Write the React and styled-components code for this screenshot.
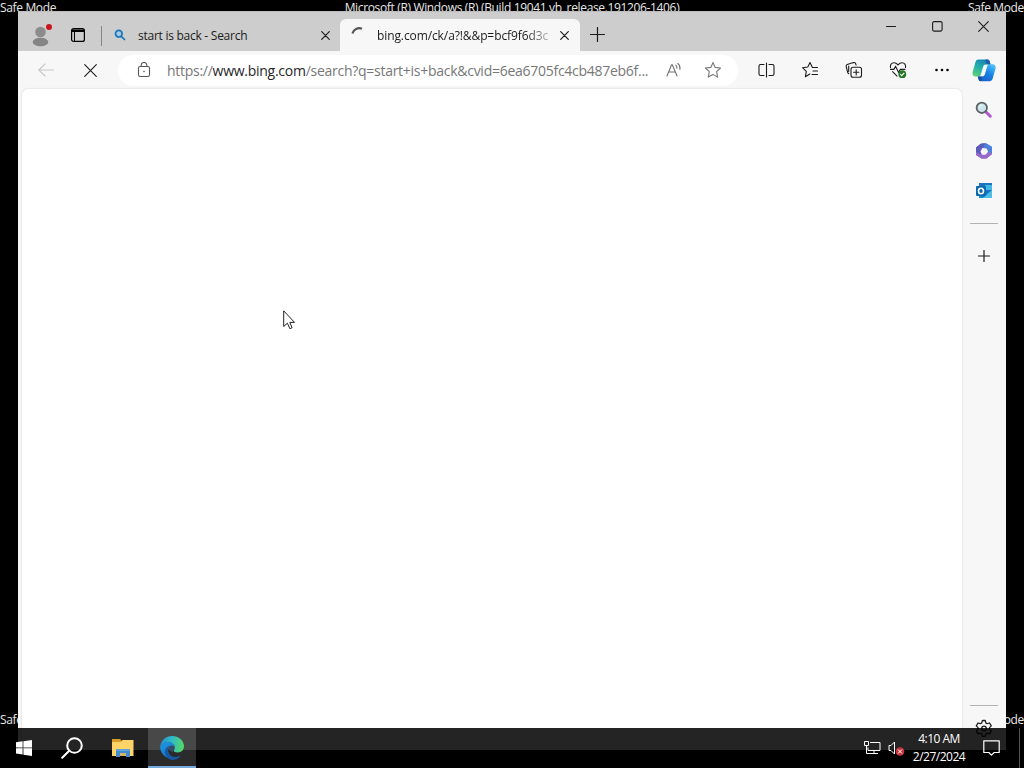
import React from "react";
import styled, { createGlobalStyle } from "styled-components";

const GlobalStyle = createGlobalStyle`
  * {
    box-sizing: border-box;
  }

  body {
    margin: 0;
    background: #000;
    overflow: hidden;
    font-family: "Open Sans", "Noto Sans", sans-serif;
  }

  svg {
    display: block;
    flex: none;
  }
`;

const Desktop = styled.div`
  position: relative;
  width: 1024px;
  height: 768px;
  background: #000;
  overflow: hidden;
`;

const SafeModeRow = styled.div`
  position: absolute;
  left: 0;
  right: 0;
  top: ${({ $top }) => $top}px;
  display: flex;
  justify-content: space-between;
  color: #e8e8e8;
  font-size: 12px;
  line-height: 16px;
  letter-spacing: -0.35px;
  white-space: nowrap;
`;

const SafeModeLabel = styled.span``;

const BrowserWindow = styled.div`
  position: absolute;
  left: 18px;
  top: 11px;
  width: 988px;
  height: 739px;
  display: flex;
  flex-direction: column;
  background: #f7f7f7;
`;

const TitleBar = styled.div`
  display: flex;
  height: 40px;
  background: #cdcdcd;
  border-top: 1px solid #bdbbbb;
`;

const TitleTools = styled.div`
  display: flex;
  align-items: center;
  width: 84px;
  padding: 7px 0 0 12px;
  gap: 17px;
`;

const TabDivider = styled.div`
  width: 1px;
  height: 20px;
  margin-top: 14px;
  margin-left: -1px;
  background: #858585;
`;

const Tab = styled.div`
  display: flex;
  align-items: center;
  width: ${({ $active }) => ($active ? 240 : 238)}px;
  height: 32px;
  margin-top: 7px;
  padding-left: ${({ $active }) => ($active ? 10 : 12)}px;
  padding-right: ${({ $active }) => ($active ? 11 : 10)}px;
  background: ${({ $active }) => ($active ? "#f7f7f7" : "transparent")};
  border-radius: 6px 6px 0 0;
`;

const TabTitle = styled.span`
  flex: 1;
  min-width: 0;
  margin-left: ${({ $fade }) => ($fade ? 11 : 12)}px;
  margin-right: 10px;
  padding-top: 1px;
  white-space: nowrap;
  font-size: 12px;
  line-height: 18px;
  letter-spacing: ${({ $spacing }) => $spacing};
  color: #1b1b1b;
  mask-image: ${({ $fade }) =>
    $fade ? "linear-gradient(to right, #000 86%, transparent 104%)" : "none"};
`;

const NewTab = styled.div`
  display: flex;
  width: 34px;
  padding: 15px 0 0 10px;
`;

const WindowControls = styled.div`
  display: flex;
  height: 29px;
  margin-left: auto;
`;

const WindowButton = styled.div`
  display: flex;
  align-items: center;
  justify-content: center;
  width: 46px;
`;

const BrowserBody = styled.div`
  display: flex;
  flex: 1;
  min-height: 0;
`;

const MainColumn = styled.div`
  display: flex;
  flex-direction: column;
  width: 944px;
`;

const Toolbar = styled.div`
  display: flex;
  align-items: center;
  width: 944px;
  height: 38px;
`;

const NavButton = styled.div`
  display: flex;
  align-items: center;
  justify-content: center;
  width: 44px;
`;

const NavGroup = styled.div`
  display: flex;
  flex: none;
  width: 100px;
  padding-left: 6px;
`;

const AddressBar = styled.div`
  display: flex;
  align-items: center;
  flex: none;
  width: 620px;
  height: 31px;
  padding-left: 18px;
  background: #fff;
  border-radius: 16px;
`;

const Url = styled.span`
  width: 498px;
  margin-left: 15px;
  padding-top: 1px;
  color: #777;
  font-size: 14px;
  line-height: 20px;
  letter-spacing: -0.27px;
  white-space: nowrap;
`;

const UrlHost = styled.b`
  color: #262626;
  font-weight: 400;
`;

const AddressActions = styled.div`
  display: flex;
  align-items: center;
  gap: 21px;
`;

const ToolbarActions = styled.div`
  display: flex;
  flex: none;
  margin-left: 6px;
`;

const Page = styled.div`
  flex: 1;
  margin-left: 4px;
  background: #fff;
  border-radius: 6px 6px 0 0;
  box-shadow: 0 0 2px rgba(0, 0, 0, 0.18);
`;

const Sidebar = styled.div`
  display: flex;
  flex-direction: column;
  align-items: center;
  flex: 1;
`;

const SidebarItem = styled.div`
  display: flex;
  align-items: center;
  justify-content: center;
  width: 40px;
  height: ${({ $height }) => $height || 40}px;
`;

const SidebarRule = styled.div`
  width: 28px;
  height: 1px;
  margin-top: ${({ $top }) => $top};
  background: #b3b3b3;
`;

const Taskbar = styled.div`
  position: absolute;
  left: 0;
  bottom: 0;
  display: flex;
  width: 1024px;
  height: 40px;
  background: rgba(0, 0, 0, 0.86);
`;

const TaskButton = styled.div`
  display: flex;
  align-items: center;
  justify-content: center;
  width: ${({ $width }) => $width || 48}px;
  padding-top: ${({ $active }) => ($active ? "1px" : "0")};
  padding-left: ${({ $inset }) => $inset || 0}px;
  background: ${({ $active }) =>
    $active ? "rgba(255, 255, 255, 0.17)" : "transparent"};
  border-bottom: ${({ $active }) => ($active ? "2px solid #76a9dc" : "0")};
`;

const Tray = styled.div`
  display: flex;
  align-items: center;
  margin-left: auto;
`;

const TrayIcons = styled.div`
  display: flex;
  gap: 7px;
  margin-right: 4px;
`;

const Clock = styled.div`
  width: 60px;
  color: #fff;
  font-size: 12px;
  line-height: 18px;
  letter-spacing: -0.5px;
  text-align: center;
  white-space: nowrap;
`;

const ActionCenter = styled.div`
  display: flex;
  padding-left: 14px;
  width: 50px;
  height: 16px;
`;

const ShowDesktop = styled.div`
  width: 5px;
  height: 40px;
  border-left: 1px solid #555;
`;

const Cursor = styled.svg`
  position: absolute;
  left: 283px;
  top: 310px;
`;

const Stroke = ({ w, h = w, color = "#1c1c1c", width = 1.1, children }) => (
  <svg
    width={w}
    height={h}
    viewBox={`0 0 ${w} ${h}`}
    fill="none"
    stroke={color}
    strokeWidth={width}
    strokeLinecap="round"
    strokeLinejoin="round"
  >
    {children}
  </svg>
);

const CloseIcon = ({ size = 9, width = 1.2 }) => (
  <Stroke w={size} width={width}>
    <path d={`M.7.7 ${size - 0.7} ${size - 0.7}M${size - 0.7}.7 .7 ${size - 0.7}`} />
  </Stroke>
);

const ProfileIcon = () => (
  <svg width="24" height="24" viewBox="0 0 24 24">
    <circle cx="10.5" cy="9" r="5.3" fill="#8c8c8c" />
    <ellipse cx="10.5" cy="19" rx="7.8" ry="4.3" fill="#858585" />
    <circle cx="19" cy="4" r="3" fill="#c9151b" />
  </svg>
);

const WorkspaceIcon = () => (
  <svg width="14" height="14" viewBox="0 0 14 14">
    <rect x=".6" y=".6" width="12.8" height="12.8" rx="2" fill="none" stroke="#000" strokeWidth="1.2" />
    <path d="M1 1.5h12V4H1z" fill="#000" />
    <path d="M3.5 4v9" stroke="#000" strokeWidth="1" />
  </svg>
);

const BingSearchIcon = () => (
  <Stroke w={12} color="#1674bb" width={1.7}>
    <circle cx="4.8" cy="4.7" r="3.3" fill="#a9cbe2" />
    <path d="m7.5 7.5 3 3" />
  </Stroke>
);

const LockIcon = () => (
  <Stroke w={16} h={16} color="#555">
    <rect x="2.5" y="4.5" width="11" height="10" rx="1.8" />
    <path d="M5.2 4.5V3a2.8 2.5 0 0 1 5.6 0v1.5" />
    <circle cx="8" cy="9.5" r=".8" fill="#555" stroke="none" />
  </Stroke>
);

const ReadAloudIcon = () => (
  <Stroke w={18} h={16} color="#707070" width={1.1}>
    <path d="M2 14 6.6 2.8h.7L12 14M3.7 10h6.6M10.8 3.2c.9.8 1.2 1.8 1.1 3M12.8 1.3c1.9 1.6 2.5 3.7 2.1 6" />
  </Stroke>
);

const StarIcon = () => (
  <Stroke w={18} color="#777">
    <path d="m9 1.5 2.2 4.9 5.3.6-3.9 3.7 1 5.4L9 13.4l-4.7 2.7 1-5.4L1.4 7l5.4-.6Z" />
  </Stroke>
);

const SplitIcon = () => (
  <Stroke w={17} h={16}>
    <path d="M6 2.5H2.5Q1 2.5 1 4v8q0 1.5 1.5 1.5H6M11 2.500h3.500Q16 2.500 16 4v8q0 1.500-1.500 1.500H11M8.500 1v14" />
  </Stroke>
);

const FavoritesIcon = () => (
  <Stroke w={18}>
    <path d="M16.5 6.500h-5.100L9 1.600 6.800 6 1.500 6.700l3.800 3.700-.9 5.400L8.800 13M12 10h4.500M11 13.500h5.500" />
  </Stroke>
);

const CollectionsIcon = () => (
  <Stroke w={18}>
    <rect x="6" y="6.3" width="10.5" height="10" rx="2" />
    <path d="M11.2 8.7v5.2M8.6 11.3h5.2M3.8 12.6c-.8-.2-1-.6-1.200-1.400L1.200 5.500C1 4.400 1.200 4 2.200 3.600l6.300-2q1.500-.4 2 .8l.6 1.600M3.700 10.500V5" />
  </Stroke>
);

const HealthIcon = () => (
  <svg width="18" height="18" viewBox="0 0 18 18" fill="none" stroke="#1c1c1c" strokeWidth="1.1">
    <path d="M1.5 7C.8 3.7 2.6 1.7 5 1.7c1.7 0 2.8.7 4 2.1 1.2-1.4 2.3-2.1 4-2.1 2.5 0 4.1 2 3.5 5.3M1 8.4h3.8l1.8-3 3 6 1.8-3h5M3.3 10.3l5 5" />
    <circle cx="13.3" cy="13.2" r="3.9" fill="#267829" stroke="none" />
    <path d="m11.3 13.2 1.4 1.4 2.6-2.8" stroke="#fff" />
  </svg>
);

const MoreIcon = () => (
  <svg width="14" height="4" viewBox="0 0 14 4">
    <circle cx="1.5" cy="2" r="1.3" />
    <circle cx="7" cy="2" r="1.3" />
    <circle cx="12.5" cy="2" r="1.3" />
  </svg>
);

const CopilotIcon = () => (
  <svg width="24" height="23" viewBox="0 0 24 23">
    <defs>
      <linearGradient id="cpLeft" x1="0.2" y1="1" x2="0.7" y2="0">
        <stop offset="0" stopColor="#5fd07a" />
        <stop offset=".5" stopColor="#22b0a8" />
        <stop offset="1" stopColor="#1a7fb8" />
      </linearGradient>
      <linearGradient id="cpRight" x1="0" y1="1" x2="0.7" y2="0">
        <stop offset="0" stopColor="#1556c0" />
        <stop offset=".6" stopColor="#1b82e4" />
        <stop offset="1" stopColor="#48bbf5" />
      </linearGradient>
    </defs>
    <path d="M6.5.5h8.700c1.800 0 2.300 1.100 2.800 3l.5 2h-4.500c-1.800 0-2.500.8-3 2.500l-2 7c-.6 1.800-1.300 2.500-3 2.500H3.600C1 17.500 0 15.500.6 13L3.500 3c.5-1.700 1.400-2.500 3-2.500Z" fill="url(#cpLeft)" />
    <path d="M16.500 5.200h3.800c2.600 0 3.900 2 3.200 4.500l-2.800 9.800c-.5 1.800-1.500 2.700-3.200 2.700H9c-1.700 0-2.300-1.100-2.700-2.700l-.5-2h4.400c1.600 0 2.300-1 2.800-2.700l2-7.100c.3-1.200.7-2.100 1.500-2.500Z" fill="url(#cpRight)" />
    <path d="M14 .5h1.200c1.800 0 2.300 1.100 2.800 3l.5 1.800h-3.700Q14 3 13 1.300Z" fill="#1e5fa8" />
    <path d="M14 6h2c-.9.500-1.100 1.300-1.400 2.300l-1.900 6.500c-.5 1.700-1.200 2.300-2.600 2.300H8.600c.9-.5 1.200-1.200 1.500-2.300l1.900-6.500c.4-1.400.9-2.100 2-2.300Z" fill="#f4fbff" />
    <path d="M5.800 17.500h3.900l-1 4.700c-1.500-.1-2-1.100-2.400-2.700Z" fill="#174fa8" />
  </svg>
);

const SidebarSearchIcon = () => (
  <svg width="18" height="18" viewBox="0 0 18 18" fill="none">
    <path d="m11 11 4.300 4.200" stroke="#b455d4" strokeWidth="3" strokeLinecap="round" />
    <circle cx="6.8" cy="6.8" r="5.2" fill="#cde5ea" stroke="#5b6265" strokeWidth="1.8" />
    <path d="M4.5 6.500Q5 4.500 7 4.200" stroke="#eef8fa" strokeWidth="1.2" />
  </svg>
);

const OfficeIcon = () => (
  <svg width="18" height="18" viewBox="0 0 18 18">
    <path d="M6 1.500h5.500L17 5v7l-5.500 4.500h-5L1 13V5.500Z" fill="#7263c9" />
    <path d="m10 1 6.500 3.500.5 7-4 .5V7L8.500 5Z" fill="#4784db" />
    <path d="m1 10 4 2.500h5l3-2 4 .5v1l-5.500 4.500h-5L1 13Z" fill="#9a68c8" />
    <path d="M5.500 2 10 1 8.500 5 5 7v5L1 10V5.500Z" fill="#5b5bb8" />
    <path d="m7.500 6 4.200.500 1.500 3.300-2.700 2.900H7L5.500 9.500Z" fill="#f7f7f7" />
  </svg>
);

const OutlookIcon = () => (
  <svg width="18" height="18" viewBox="0 0 18 18">
    <path d="M4 1h13v15H4z" fill="#1975bd" />
    <path d="M10 3h7v5h-7z" fill="#41b6e8" />
    <path d="m4 9 6 4 7-5v8H4z" fill="#1686cc" />
    <path d="m8 16 9-8v8z" fill="#50bce8" />
    <rect x="1" y="4" width="10" height="10" rx="1" fill="#0a68b0" />
    <ellipse cx="6" cy="9" rx="2.5" ry="2.7" fill="none" stroke="#fff" strokeWidth="1.6" />
  </svg>
);

const PlusIcon = ({ size = 14 }) => (
  <Stroke w={size} width={1.2}>
    <path d={`M${size / 2 - 0.5} .5v${size - 2}M.5 ${size / 2 - 0.5}h${size - 2}`} />
  </Stroke>
);

const GearIcon = () => (
  <Stroke w={18} width={1.3}>
    <path d="m7.3 1.700.5-.2h2.400l.6 2.400 1.400.8 2.400-.7 1.700 2.900-1.800 1.700v1.600l1.800 1.700-1.700 2.900-2.400-.7-1.400.8-.6 2.400H7.400l-.6-2.400-1.400-.8-2.400.7-1.700-2.900 1.800-1.700V8.600L1.300 6.900 3 4l2.400.7 1.400-.8Z" />
    <circle cx="9" cy="9.4" r="2.300" />
  </Stroke>
);

const WindowsIcon = () => (
  <svg width="16" height="16" viewBox="0 0 16 16" fill="#fff">
    <path d="M0 2.300 6.600 1.300v6.200H0zM7.400 1.200 16 0v7.500H7.400zM0 8.300h6.600v6.300L0 13.600zM7.400 8.300H16V16l-8.600-1.300z" />
  </svg>
);

const TaskSearchIcon = () => (
  <Stroke w={22} color="#fff" width={2}>
    <circle cx="13.5" cy="8.5" r="7.3" />
    <path d="m8.2 13.800-7 7" />
  </Stroke>
);

const FolderIcon = () => (
  <svg width="22" height="20" viewBox="0 0 22 20">
    <path d="M0 1h8l2 2h11v4H0z" fill="#d99d27" />
    <path d="M0 4h9l1.500-2h11v16H0z" fill="#ffd367" />
    <path d="M4 11h14v8h-4v-4H8v4H4z" fill="#438dce" />
    <path d="M8 15h6v3H8z" fill="#d6b36a" />
    <path d="M4 11h14v2H4z" fill="#5ba4dc" />
  </svg>
);

const EdgeIcon = () => (
  <svg width="24" height="24" viewBox="0 0 24 24">
    <defs>
      <linearGradient id="edgeTop" x1="0" y1="0.4" x2="1" y2="0.5">
        <stop offset="0" stopColor="#258fd1" />
        <stop offset=".5" stopColor="#30bdc4" />
        <stop offset="1" stopColor="#58d760" />
      </linearGradient>
      <linearGradient id="edgeBody" x1="0" y1="0" x2="0.5" y2="1">
        <stop offset="0" stopColor="#1f9be4" />
        <stop offset="1" stopColor="#1670c4" />
      </linearGradient>
    </defs>
    <path d="M.1 11C.8 4.500 5.600 0 12 0c6.800 0 12 4.600 12 10.300 0 3.900-2.800 6.100-6.200 6.100-2.600 0-4.100-.8-4.100-1.700 0-.7 1.100-1.200 1.100-3.100 0-3.200-3.100-5.600-7-5.600C4.200 6 1.500 8 .1 11Z" fill="url(#edgeTop)" />
    <path d="M.1 11C1.500 7.900 4.200 6 7.800 6c3.700 0 6.600 2.200 7 5-.7-1-1.700-1.500-2.800-1.500-2.300 0-4 2-4 4.700 0 4.500 3.700 7.600 8.500 7.600A12 12 0 0 1 .1 11Z" fill="url(#edgeBody)" />
    <path d="M10.500 9.800C8.900 10.500 8 12.100 8 14.200c0 5.300 6 8.600 11.400 5.900.8-.4 1.500-.9 1.100-.2C18.600 22.300 15.600 24 12 24 7.700 23.300 5 19.700 5 15.800c0-3 2.200-5.400 5.500-6Z" fill="#155aa6" />
    <ellipse cx="12" cy="12.8" rx="2.3" ry="2.9" fill="#334d67" />
  </svg>
);

const NetworkIcon = () => (
  <svg width="17" height="14" viewBox="0 0 17 14" fill="none" stroke="#fff">
    <path d="M6 1.500h10v8H4V6.500M10 9.500v3M6 12.500h8M.5.500h4v4h-4zM2.500 4.500v8H6" />
  </svg>
);

const MutedIcon = () => (
  <svg width="17" height="15" viewBox="0 0 17 15" fill="none" stroke="#fff">
    <path d="M1 4.500h2L6.500 1v12L3 9.500H1z" />
    <circle cx="12" cy="10.500" r="4.300" fill="#c9343d" stroke="none" />
    <path d="m10 8.500 4 4m0-4-4 4" />
  </svg>
);

function App() {
  return (
    <>
      <GlobalStyle />
      <Desktop>
        <SafeModeRow $top={0}>
          <SafeModeLabel>Safe Mode</SafeModeLabel>
          <SafeModeLabel>
            Microsoft (R) Windows (R) (Build 19041.vb_release.191206-1406)
          </SafeModeLabel>
          <SafeModeLabel>Safe Mode</SafeModeLabel>
        </SafeModeRow>
        <SafeModeRow $top={712}>
          <SafeModeLabel>Safe Mode</SafeModeLabel>
          <SafeModeLabel>Safe Mode</SafeModeLabel>
        </SafeModeRow>

        <BrowserWindow>
          <TitleBar>
            <TitleTools>
              <ProfileIcon />
              <WorkspaceIcon />
            </TitleTools>
            <TabDivider />
            <Tab>
              <BingSearchIcon />
              <TabTitle $spacing="-0.26px">start is back - Search</TabTitle>
              <CloseIcon />
            </Tab>
            <Tab $active>
              <Stroke w={16} color="#555" width={2.2}>
                <path d="M2.4 6.500A7 7 0 0 1 12 1.800" strokeLinecap="butt" />
              </Stroke>
              <TabTitle $fade $spacing="-0.1px">
                bing.com/ck/a?!&amp;&amp;p=bcf9f6d3c
              </TabTitle>
              <CloseIcon />
            </Tab>
            <NewTab>
              <PlusIcon size={16} />
            </NewTab>
            <WindowControls>
              <WindowButton>
                <Stroke w={10}>
                  <path d="M.5 4.500h9" />
                </Stroke>
              </WindowButton>
              <WindowButton>
                <Stroke w={11}>
                  <rect x=".6" y=".6" width="9.5" height="9.5" rx="1.5" />
                </Stroke>
              </WindowButton>
              <WindowButton>
                <CloseIcon size={11} width={1.1} />
              </WindowButton>
            </WindowControls>
          </TitleBar>

          <BrowserBody>
            <MainColumn>
              <Toolbar>
                <NavGroup>
                  <NavButton>
                    <Stroke w={16} h={14} color="#c8c8c8">
                      <path d="M15.5 7H.8M7 1 .8 7 7 13" />
                    </Stroke>
                  </NavButton>
                  <NavButton>
                    <CloseIcon size={13} width={1.1} />
                  </NavButton>
                </NavGroup>
                <AddressBar>
                  <LockIcon />
                  <Url>
                    https://<UrlHost>www.bing.com</UrlHost>
                    /search?q=start+is+back&amp;cvid=6ea6705fc4cb487eb6f...
                  </Url>
                  <AddressActions>
                    <ReadAloudIcon />
                    <StarIcon />
                  </AddressActions>
                </AddressBar>
                <ToolbarActions>
                  <NavButton>
                    <SplitIcon />
                  </NavButton>
                  <NavButton>
                    <FavoritesIcon />
                  </NavButton>
                  <NavButton>
                    <CollectionsIcon />
                  </NavButton>
                  <NavButton>
                    <HealthIcon />
                  </NavButton>
                  <NavButton>
                    <MoreIcon />
                  </NavButton>
                </ToolbarActions>
              </Toolbar>
              <Page />
            </MainColumn>
            <Sidebar>
              <SidebarItem $height={38}>
                <CopilotIcon />
              </SidebarItem>
              <SidebarItem $height={42}>
                <SidebarSearchIcon />
              </SidebarItem>
              <SidebarItem>
                <OfficeIcon />
              </SidebarItem>
              <SidebarItem>
                <OutlookIcon />
              </SidebarItem>
              <SidebarRule $top="12px" />
              <SidebarItem $height={64}>
                <PlusIcon size={13} />
              </SidebarItem>
              <SidebarRule $top="auto" />
              <SidebarItem $height={44}>
                <GearIcon />
              </SidebarItem>
            </Sidebar>
          </BrowserBody>
        </BrowserWindow>

        <Cursor width="14" height="21" viewBox="0 0 14 21">
          <path d="M.7.8v15.700l3.700-3.300 2.500 5.500 2.200-1-2.300-5.300h4.700Z" fill="#fff" stroke="#222" />
        </Cursor>

        <Taskbar>
          <TaskButton>
            <WindowsIcon />
          </TaskButton>
          <TaskButton>
            <TaskSearchIcon />
          </TaskButton>
          <TaskButton $width={52} $inset={2}>
            <FolderIcon />
          </TaskButton>
          <TaskButton $active>
            <EdgeIcon />
          </TaskButton>
          <Tray>
            <TrayIcons>
              <NetworkIcon />
              <MutedIcon />
            </TrayIcons>
            <Clock>
              4:10 AM
              <br />
              2/27/2024
            </Clock>
            <ActionCenter>
              <Stroke w={17} h={16} color="#fff" width={1.2}>
                <path d="M.8.8h15.400v11.700h-5L8.500 15.200l-2.700-2.700h-5Z" />
              </Stroke>
            </ActionCenter>
            <ShowDesktop />
          </Tray>
        </Taskbar>
      </Desktop>
    </>
  );
}

export default App;
